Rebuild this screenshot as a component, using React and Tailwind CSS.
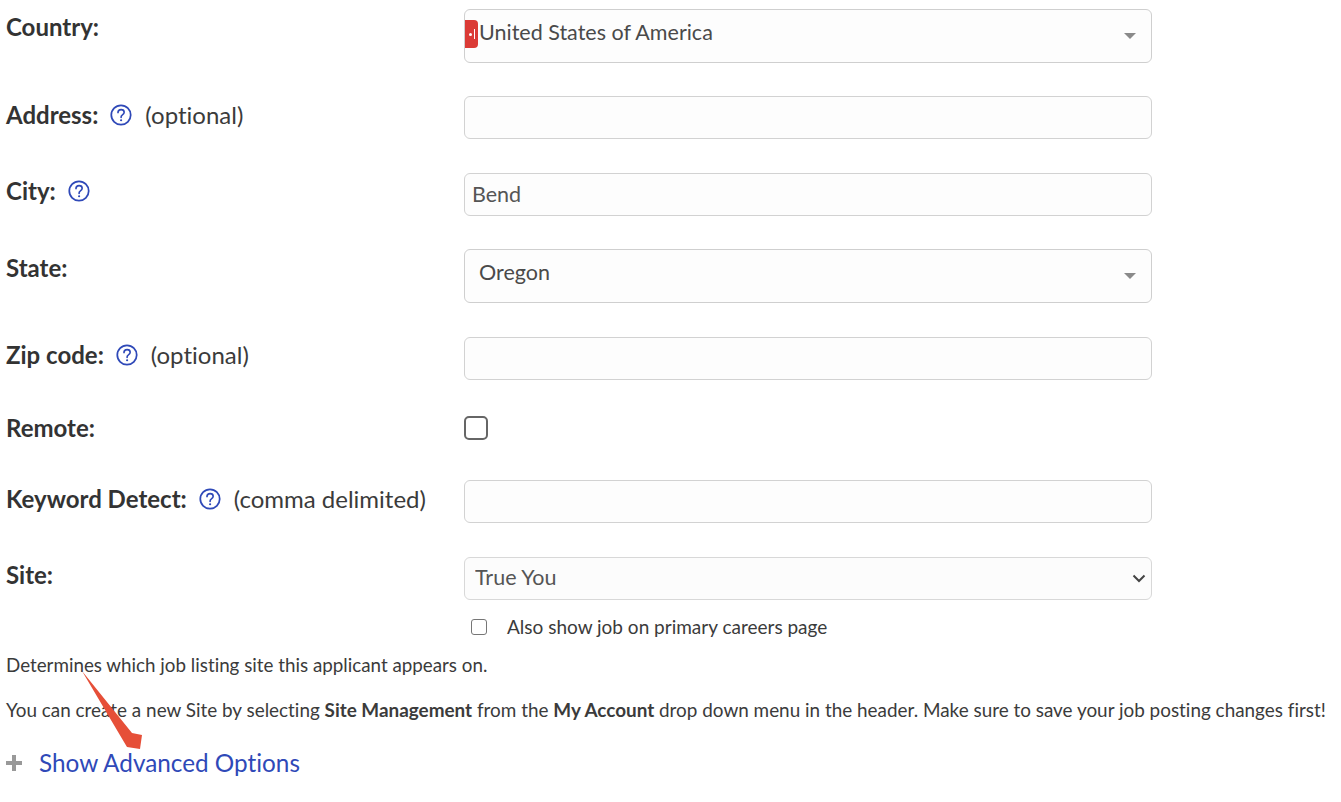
import React from 'react';

const font = 'font-["Lato","Open_Sans",sans-serif] [font-variant-ligatures:none]';

function Help() {
  return (
    <svg width="24" height="24" viewBox="0 0 22 22" fill="none" className="shrink-0">
      <circle cx="11" cy="11" r="8.9" stroke="#2f49b8" strokeWidth="1.6" />
      <path d="M8.2 8.8c.1-1.7 1.3-2.7 2.9-2.7 1.6 0 2.8 1 2.8 2.4 0 1.2-.7 1.8-1.6 2.4-.8.5-1.2 1-1.2 2v.4" stroke="#2f49b8" strokeWidth="1.5" strokeLinecap="round" />
      <circle cx="11.1" cy="15.8" r="1" fill="#2f49b8" />
    </svg>
  );
}

function Label({ children, help, note, className = '' }) {
  return (
    <div className={`flex items-center text-[24px] leading-[30px] text-[#3b3b3b] ${className}`}>
      <span className="font-bold text-[#333]">{children}</span>
      {help && <span className="ml-[11px]"><Help /></span>}
      {note && <span className="ml-[12px]">{note}</span>}
    </div>
  );
}

function FakeSelect({ value, flag }) {
  return (
    <div className="relative flex h-[54px] w-[688px] items-start rounded-[6px] border border-[#cfcfcf] bg-[#fdfdfd] pl-[14px] pt-[7px] text-[21.5px] leading-[30px] text-[#4a4a4a]">
      {flag && (
        <span className="absolute left-0 top-[10px] flex h-[28px] w-[13px] items-center justify-center gap-[2px] rounded-[4px] rounded-l-none bg-[#db3b36]">
          <span className="h-[3px] w-[3px] rounded-full bg-white" />
          <span className="h-[10px] w-[1px] bg-white" />
        </span>
      )}
      {value}
      <svg width="14" height="8" viewBox="0 0 14 8" className="absolute right-[14px] top-[22px]">
        <path d="M1 1h12L7 7z" fill="#8a8a8a" />
      </svg>
    </div>
  );
}

function TextInput({ value = '' }) {
  return (
    <input
      readOnly
      value={value}
      className="block h-[43px] w-[688px] rounded-[6px] border border-[#d2d2d2] bg-[#fdfdfd] px-[7px] pb-[2px] text-[21.5px] text-[#555] outline-none"
    />
  );
}

export default function App() {
  return (
    <div className={`relative h-[802px] w-[1341px] overflow-hidden bg-white pl-[6px] pt-[9px] ${font}`}>
      <div className="grid grid-cols-[458px_688px] items-start">
        <Label className="pt-[3px]">Country:</Label>
        <FakeSelect value="United States of America" flag />

        <Label className="mt-[33px] pt-[4px]" help note="(optional)">Address:</Label>
        <div className="mt-[33px]"><TextInput /></div>

        <Label className="mt-[34px] pt-[3px]" help>City:</Label>
        <div className="mt-[34px]"><TextInput value="Bend" /></div>

        <Label className="mt-[33px] pt-[4px]">State:</Label>
        <div className="mt-[33px]"><FakeSelect value="Oregon" /></div>

        <Label className="mt-[34px] pt-[3px]" help note="(optional)">Zip code:</Label>
        <div className="mt-[34px]"><TextInput /></div>

        <Label className="mt-[36px] h-[24px]">Remote:</Label>
        <div className="mt-[36px]">
          <div className="h-[24px] w-[24px] rounded-[5px] border-[2px] border-[#666] bg-white" />
        </div>

        <Label className="mt-[40px] pt-[4px]" help note="(comma delimited)">Keyword Detect:</Label>
        <div className="mt-[40px]"><TextInput /></div>

        <Label className="mt-[34px] pt-[3px]">Site:</Label>
        <div className="mt-[34px]">
          <div className="relative">
            <select className="block h-[43px] w-[688px] appearance-none rounded-[6px] border border-[#d8d8d8] bg-[#fcfcfc] px-[10px] pb-[2px] text-[21.5px] text-[#555] outline-none">
              <option>True You</option>
            </select>
            <svg width="14" height="9" viewBox="0 0 14 9" fill="none" className="pointer-events-none absolute right-[6px] top-[17px]">
              <path d="M1.5 1.5L7 7l5.5-5.5" stroke="#444" strokeWidth="2" />
            </svg>
          </div>
          <label className="ml-[7px] mt-[15px] flex items-center text-[19px] leading-[24px] text-[#3b3b3b]">
            <span className="h-[16px] w-[16px] rounded-[3px] border border-[#767676] bg-white" />
            <span className="ml-[20px]">Also show job on primary careers page</span>
          </label>
        </div>
      </div>

      <p className="mt-[13px] text-[18.8px] leading-[26px] text-[#3b3b3b]">
        Determines which job listing site this applicant appears on.
      </p>
      <p className="mt-[19px] whitespace-nowrap text-[18.9px] leading-[26px] text-[#3b3b3b]">
        You can create a new Site by selecting <b>Site Management</b> from the <b>My Account</b> drop down menu in the header. Make sure to save your job posting changes first!
      </p>

      <div className="mt-[24px] flex items-center text-[24.3px] leading-[32px]">
        <svg width="16" height="16" viewBox="0 0 16 16"><path d="M6 0h4v6h6v4h-6v6H6v-6H0V6h6z" fill="#999" /></svg>
        <span className="ml-[17px] text-[#2f49b8]">Show Advanced Options</span>
      </div>

      {/* red annotation arrow */}
      <svg width="70" height="85" viewBox="0 0 70 85" className="absolute left-[80px] top-[670px]">
        <path d="M2 1 L52 63 L62 65 L60 79 L47 77 L44 72 Z" fill="#e64f38" />
      </svg>
    </div>
  );
}
